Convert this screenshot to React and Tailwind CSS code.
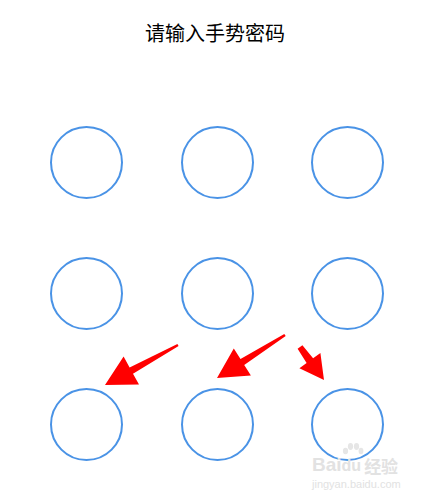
const arrows = [
  { tail: [178, 345], tip: [105, 385], head: 30, hw: 16, tw: 2.5, nw: 7 },
  { tail: [285, 335], tip: [217, 378], head: 30, hw: 16, tw: 2.5, nw: 7 },
  { tail: [300, 347], tip: [324, 380], head: 24, hw: 13, tw: 6, nw: 8 },
];

function arrowPoints({ tail, tip, head, hw, tw, nw }) {
  const dx = tip[0] - tail[0];
  const dy = tip[1] - tail[1];
  const len = Math.hypot(dx, dy);
  const ux = dx / len;
  const uy = dy / len;
  const px = -uy;
  const py = ux;
  const bx = tip[0] - ux * head;
  const by = tip[1] - uy * head;
  const pts = [
    [tail[0] + px * tw / 2, tail[1] + py * tw / 2],
    [bx + px * nw / 2, by + py * nw / 2],
    [bx + px * hw, by + py * hw],
    tip,
    [bx - px * hw, by - py * hw],
    [bx - px * nw / 2, by - py * nw / 2],
    [tail[0] - px * tw / 2, tail[1] - py * tw / 2],
  ];
  return pts.map((p) => p.map((v) => v.toFixed(1)).join(',')).join(' ');
}

function Dot() {
  return <div className="w-[73px] h-[73px] rounded-full border-2 border-[#4a93e6]" />;
}

export default function App() {
  return (
    <div
      className="relative w-[430px] h-[500px] bg-white overflow-hidden"
      style={{ fontFamily: '"Noto Sans CJK SC", "Liberation Sans", sans-serif' }}
    >
      <h1 className="pt-[19px] text-center text-[20px] leading-[28px] font-normal text-black">
        请输入手势密码
      </h1>

      <div className="mt-[79px] ml-[50px] grid grid-cols-[repeat(3,73px)] gap-x-[57.5px] gap-y-[58px]">
        {Array.from({ length: 9 }).map((_, i) => (
          <Dot key={i} />
        ))}
      </div>

      <svg className="absolute inset-0 pointer-events-none" width="430" height="500">
        {arrows.map((a, i) => (
          <polygon key={i} points={arrowPoints(a)} fill="#ff0000" />
        ))}
      </svg>

      <div className="absolute left-[312px] top-[455px] flex flex-col items-start text-[#e2e2e2]">
        <div className="flex items-end leading-none">
          <span className="text-[19px] font-bold" style={{ fontFamily: '"Liberation Sans", sans-serif' }}>Bai</span>
          <span className="relative text-[16px] font-bold" style={{ fontFamily: '"Liberation Sans", sans-serif' }}>
            du
            <svg className="absolute -top-[16px] left-[0px]" width="22" height="16" viewBox="0 0 22 16">
              <ellipse cx="3.5" cy="9" rx="2.6" ry="3.2" fill="#e6e6e6" />
              <ellipse cx="8.5" cy="4.5" rx="2.6" ry="3.4" fill="#e6e6e6" />
              <ellipse cx="14.5" cy="4.5" rx="2.6" ry="3.4" fill="#e6e6e6" />
              <ellipse cx="19" cy="9" rx="2.4" ry="3.2" fill="#e6e6e6" />
            </svg>
          </span>
          <span className="ml-[3px] text-[17px] font-bold">经验</span>
        </div>
        <span className="mt-[5px] text-[11px] leading-none" style={{ fontFamily: '"Liberation Sans", sans-serif' }}>
          jingyan.baidu.com
        </span>
      </div>
    </div>
  );
}
